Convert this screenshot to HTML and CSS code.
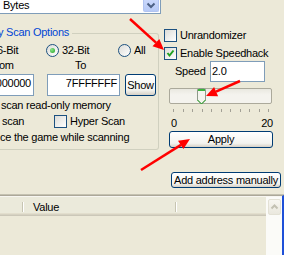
FILE: index.html
```html
<!DOCTYPE html>
<html>

<head>
	<meta charset='utf-8'>
	<title>Speedhack</title>
	<meta name='viewport' content='width=device-width, initial-scale=1'>
	<link rel="stylesheet" href="styles.css">
</head>

<body>
	<div class="window">
		<div class="top">
			<div class="left">
				<div class="combo">
					<span class="combo-text">Bytes</span>
					<span class="combo-btn">
						<svg width="14" height="11" viewBox="0 0 14 11"><path d="M3.5 3.5 L7 7 L10.5 3.5" fill="none" stroke="#4D6185" stroke-width="2" /></svg>
					</span>
				</div>

				<div class="group">
					<div class="group-title">y Scan Options</div>
					<div class="row radios">
						<span class="r16">6-Bit</span>
						<span class="radio on"></span>
						<span class="r32">32-Bit</span>
						<span class="radio"></span>
						<span class="rall">All</span>
					</div>
					<div class="row labels">
						<span class="lbl-from">om</span>
						<span>To</span>
					</div>
					<div class="row edits">
						<div class="edit edit-from">00000000</div>
						<div class="edit edit-to">7FFFFFFF</div>
						<button class="btn btn-show">Show</button>
					</div>
					<div class="row opt opt-ro">scan read-only memory</div>
					<div class="row opt">
						<span class="opt-fast">scan</span>
						<span class="check"><span class="box"></span>Hyper Scan</span>
					</div>
					<div class="row opt opt-pause">ce the game while scanning</div>
				</div>
			</div>

			<div class="right">
				<span class="check check-unrand"><span class="box"></span>Unrandomizer</span>
				<span class="check check-speed"><span class="box"><svg width="11" height="11" viewBox="0 0 11 11"><path d="M2.5 5 L4.5 7.5 L8.5 2.5" fill="none" stroke="#21A121" stroke-width="2" /></svg></span>Enable Speedhack</span>
				<div class="speed">
					<span class="speed-label">Speed</span>
					<div class="edit edit-speed">2.0</div>
				</div>
				<div class="track">
					<svg class="thumb" width="9" height="17" viewBox="0 0 9 17">
						<path d="M0.5 1.5 Q0.5 0.5 1.5 0.5 H7.5 Q8.5 0.5 8.5 1.5 V12 L4.5 16 L0.5 12 Z" fill="#F4F4EE" stroke="#8E9A8A" />
						<path d="M1 1 H8 V3 H1 Z" fill="#3DB33D" />
						<path d="M0.5 12 L4.5 16 L8.5 12" fill="none" stroke="#21A121" />
					</svg>
				</div>
				<div class="ticks">
					<span></span><span></span><span></span><span></span><span></span><span></span>
					<span></span><span></span><span></span><span></span><span></span>
				</div>
				<div class="scale"><span>0</span><span>20</span></div>
				<button class="btn btn-apply">Apply</button>
				<button class="btn btn-add">Add address manually</button>
			</div>
		</div>

		<div class="list">
			<div class="list-frame">
				<div class="list-main">
					<div class="header">
						<span class="hcol hcol-addr"></span>
						<span class="hsep"></span>
						<span class="hcol hcol-value">Value</span>
						<span class="hsep"></span>
					</div>
				</div>
				<div class="scrollbar">
					<span class="sb-up">
						<svg width="11" height="14" viewBox="0 0 11 14"><path d="M2.5 8.5 L5.5 5.5 L8.5 8.5" fill="none" stroke="#C3C1B3" stroke-width="2" /></svg>
					</span>
				</div>
			</div>
		</div>

		<!-- red callout arrows drawn over the dialog -->
		<svg class="arrows" width="284" height="255" viewBox="0 0 284 255">
			<g fill="#F00" stroke="#F00">
				<line x1="130" y1="19" x2="156" y2="42.6" stroke-width="2.5" />
				<polygon points="164,50 152.5,46.3 159.3,38.9" stroke="none" />
				<line x1="240" y1="81" x2="216" y2="91.6" stroke-width="2.5" />
				<polygon points="206,96 214.1,87 218.1,96.2" stroke="none" />
				<line x1="141" y1="170" x2="181" y2="144.9" stroke-width="2.5" />
				<polygon points="190,139 183.4,149.1 178,140.7" stroke="none" />
			</g>
		</svg>
	</div>
</body>

</html>
```

FILE: styles.css
```css
* {
	box-sizing: border-box;
}

html,
body {
	margin: 0;
	height: 100%;
}

body {
	background: #ECE9D8;
	color: #000;
	font: 11px/13px "Liberation Sans", Arial, sans-serif;
	letter-spacing: -0.25px;
	overflow: hidden;
}

.window {
	position: relative;
	width: 284px;
	height: 255px;
	overflow: hidden;
}

.top {
	display: flex;
	height: 194px;
}

.left {
	width: 161px;
}

/* combo box */
.combo {
	display: flex;
	justify-content: space-between;
	height: 14px;
	background: #fff;
	border-right: 1px solid #7F9DB9;
	border-bottom: 1px solid #7F9DB9;
	line-height: 11px;
}

.combo-text {
	padding-left: 3px;
}

.combo-btn {
	display: flex;
	justify-content: center;
	width: 16px;
	height: 12px;
	margin-right: 1px;
	border: 1px solid #B1C4F1;
	border-top: none;
	border-radius: 0 0 2px 2px;
	background: linear-gradient(#CAD8FC, #B7CAF6);
}

/* group box */
.group {
	width: 159px;
	height: 117px;
	margin-top: 19px;
	border: 1px solid #D0D0BF;
	border-left: none;
	border-radius: 0 3px 3px 0;
}

.group-title {
	width: fit-content;
	margin: -8px 0 0 -2px;
	padding-right: 3px;
	background: #ECE9D8;
	color: #0046D5;
}

.row {
	display: flex;
	align-items: center;
	height: 13px;
}

.radios {
	margin-top: 5px;
}

.r16 {
	width: 49px;
	margin-left: -3px;
}

.r32 {
	width: 56px;
	margin-left: 3px;
}

.rall {
	margin-left: 3px;
}

.radio {
	flex: none;
	display: flex;
	align-items: center;
	justify-content: center;
	width: 13px;
	height: 13px;
	border: 1px solid #1C5180;
	border-radius: 50%;
	background: linear-gradient(135deg, #DCDCD7, #fff);
}

.radio.on::after {
	content: "";
	width: 5px;
	height: 5px;
	border-radius: 50%;
	background: radial-gradient(circle at 35% 35%, #8BE68B, #21A121);
}

.labels {
	margin-top: 2px;
}

.lbl-from {
	width: 76px;
	margin-left: -1px;
}

.edits {
	height: 22px;
	margin-top: 2px;
}

.edit {
	display: flex;
	justify-content: flex-end;
	height: 100%;
	padding: 2px 2px 0 0;
	overflow: hidden;
	background: #fff;
	border: 1px solid #7F9DB9;
	white-space: nowrap;
}

.edit-from {
	width: 35px;
	margin-left: -1px;
	padding-right: 2px;
}

.edit-to {
	width: 73px;
	margin-left: 13px;
}

.btn {
	display: block;
	padding: 0;
	font: inherit;
	letter-spacing: inherit;
	line-height: 13px;
	color: #000;
	text-align: center;
	border: 1px solid #003C74;
	border-radius: 3px;
	background: linear-gradient(#FFFFFF, #F3F3EF 75%, #D6D0C5);
}

.btn-show {
	width: 31px;
	height: 22px;
	margin-left: 5px;
}

.opt-ro {
	margin-top: 4px;
	padding-left: 1px;
}

.opt {
	margin-top: 3px;
}

.opt-fast {
	width: 52px;
	margin-left: 2px;
}

.check {
	display: flex;
	align-items: center;
	gap: 3px;
	height: 13px;
}

.box {
	flex: none;
	width: 13px;
	height: 13px;
	border: 1px solid #1C5180;
	background: linear-gradient(135deg, #DCDCD7, #fff);
}

.box svg {
	display: block;
}

/* right column */
.right {
	display: flex;
	flex: 1;
	flex-direction: column;
	align-items: flex-start;
}

.check-unrand {
	margin: 29px 0 0 3px;
}

.check-speed {
	margin: 5px 0 0 3px;
}

.speed {
	display: flex;
	align-items: center;
	height: 21px;
	margin-top: 1px;
}

.speed-label {
	width: 49px;
	padding-left: 14px;
}

.edit-speed {
	justify-content: flex-start;
	width: 55px;
	padding: 3px 0 0 1px;
}

.track {
	width: 103px;
	height: 16px;
	margin: 6px 0 0 8px;
	padding-left: 27px;
	border: 1px solid #ABA99B;
	border-radius: 2px;
	background: linear-gradient(#E9E8E0, #F4F3EE 40%);
}

.thumb {
	display: block;
	margin-top: -1px;
}

.ticks {
	display: flex;
	justify-content: space-between;
	width: 96px;
	height: 3px;
	margin: 5px 0 0 12px;
}

.ticks span {
	width: 1px;
	background: #A2A096;
}

.scale {
	display: flex;
	justify-content: space-between;
	width: 102px;
	margin: 5px 0 0 10px;
}

.btn-apply {
	width: 104px;
	height: 17px;
	margin: 1px 0 0 8px;
}

.btn-add {
	width: 110px;
	height: 16px;
	margin: 24px 0 0 10px;
	padding-top: 1px;
}

/* address list */
.list {
	display: flex;
	flex-direction: column;
	height: 61px;
	border-top: 1px solid #C4C1B1;
}

.list-frame {
	display: flex;
	flex: 1;
	border-top: 1px solid #ACA899;
	border-right: 2px solid #1E50D8;
}

.list-main {
	flex: 1;
	border-top: 1px solid #F7F6F1;
}

.header {
	display: flex;
	height: 19px;
	line-height: 11px;
	background: linear-gradient(#EBEADB 16px, #E2DECD 16px 17px, #D6D2C2 17px 18px, #CBC7B8 18px);
}

.hcol {
	padding-top: 5px;
}

.hcol-addr {
	width: 22px;
}

.hcol-value {
	width: 151px;
	padding-left: 9px;
}

.hsep {
	width: 2px;
	height: 10px;
	margin-top: 5px;
	background: linear-gradient(to right, #C7C5B2 50%, #fff 50%);
}

.scrollbar {
	width: 16px;
	padding: 2px 1px 0 2px;
	border-top: 1px solid #F7F6F1;
	background: #FBFBF8;
}

.sb-up {
	display: flex;
	justify-content: center;
	width: 13px;
	height: 16px;
	border: 1px solid #E3E1D5;
	border-radius: 2px;
	background: linear-gradient(#F7F6F1, #EAE8DE);
}

.arrows {
	position: absolute;
	left: 0;
	top: 0;
	pointer-events: none;
}
```
